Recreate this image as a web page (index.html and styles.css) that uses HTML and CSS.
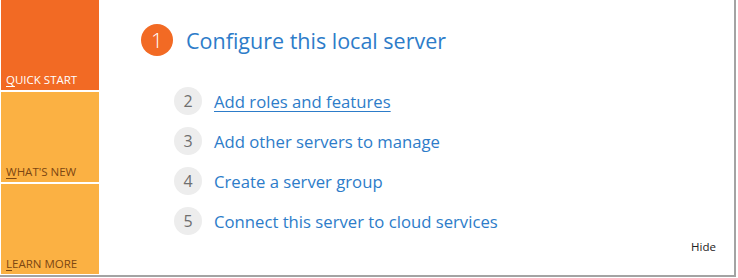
FILE: index.html
```html
<!DOCTYPE html>
<html lang="en">
<head>
  <meta charset="UTF-8" />
  <title>Welcome to Server Manager</title>
  <link rel="stylesheet" href="styles.css">
</head>
<body>
  <div class="frame">
    <div class="tiles">
      <div class="tile quick"><span><u>Q</u>UICK START</span></div>
      <div class="tile"><span><u>W</u>HAT'S NEW</span></div>
      <div class="tile"><span><u>L</u>EARN MORE</span></div>
    </div>

    <div class="content">
      <div class="heading">
        <span class="num-main">1</span>
        <h1>Configure this local server</h1>
      </div>

      <ul class="steps">
        <li><span class="num">2</span><a href="#" class="active">Add roles and features</a></li>
        <li><span class="num">3</span><a href="#">Add other servers to manage</a></li>
        <li><span class="num">4</span><a href="#">Create a server group</a></li>
        <li><span class="num">5</span><a href="#">Connect this server to cloud services</a></li>
      </ul>

      <div class="hide">Hide</div>
    </div>
  </div>
</body>
</html>
```

FILE: styles.css
```css
* {
  margin: 0;
  padding: 0;
  box-sizing: border-box;
}
body {
  background: #fff;
  font-family: 'Open Sans', 'Noto Sans', sans-serif;
}
.frame {
  display: flex;
  width: 736px;
  height: 277px;
  border-right: 2px solid #a3a3a3;
  border-bottom: 2px solid #a3a3a3;
  background: #fff;
}
.tiles {
  display: flex;
  flex-direction: column;
  gap: 2px;
  width: 98px;
  margin-left: 1px;
}
.tile {
  height: 90px;
  background-color: #fbb143;
  color: #7c4612;
  font-size: 11.5px;
  padding: 0 0 3px 5px;
  display: flex;
  align-items: flex-end;
}
.tile u {
  text-decoration-thickness: 1px;
  text-underline-offset: 2px;
}
.quick {
  background-color: #f26a24;
  color: #fff;
}
.content {
  flex: 1;
  position: relative;
  padding: 24px 0 0 42px;
}
.heading {
  display: flex;
  align-items: center;
  gap: 13px;
}
.num-main {
  width: 32px;
  height: 32px;
  border-radius: 50%;
  background-color: #f26a24;
  color: #fff;
  font-size: 21px;
  font-weight: 300;
  display: flex;
  align-items: center;
  justify-content: center;
}
h1 {
  font-size: 21.5px;
  font-weight: 400;
  color: #2d7cc9;
}
.steps {
  list-style: none;
  margin: 31px 0 0 33px;
  display: flex;
  flex-direction: column;
  gap: 12px;
}
.steps li {
  display: flex;
  align-items: center;
  gap: 12px;
}
.num {
  width: 28px;
  height: 28px;
  border-radius: 50%;
  background-color: #ededed;
  color: #6f6f6f;
  font-size: 16px;
  display: flex;
  align-items: center;
  justify-content: center;
}
.steps a {
  color: #2d7cc9;
  font-size: 16.7px;
  text-decoration: none;
}
.steps a.active {
  text-decoration: underline;
  text-underline-offset: 3px;
}
.hide {
  position: absolute;
  right: 18px;
  bottom: 21px;
  font-size: 11.5px;
  color: #222;
}
```
